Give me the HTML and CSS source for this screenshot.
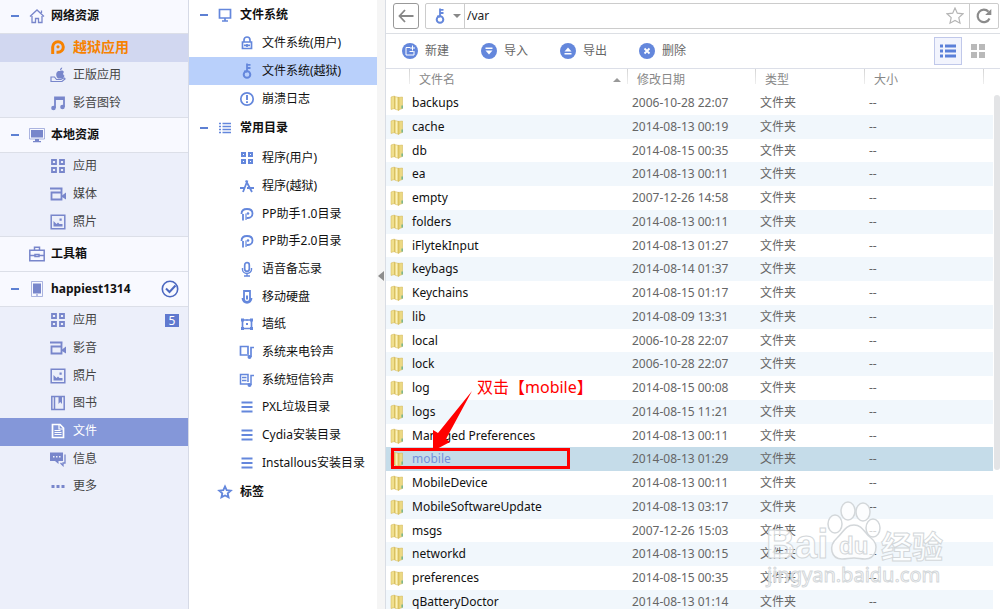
FILE: index.html
```html
<!DOCTYPE html>
<html lang="zh-CN">
<head>
    <meta charset="UTF-8">
    <meta name="viewport" content="width=device-width, initial-scale=1.0">
    <title>文件系统(越狱)</title>
    <link rel="stylesheet" href="styles.css">
</head>
<body>
    <!-- Icon definitions -->
    <svg class="defs" aria-hidden="true">
        <defs>
            <linearGradient id="gold" x1="0" x2="1" y1="0" y2="0">
                <stop offset="0" stop-color="#e0c65a"/>
                <stop offset=".45" stop-color="#fbf2bd"/>
                <stop offset="1" stop-color="#d9bd50"/>
            </linearGradient>
        </defs>
        <symbol id="house" viewBox="0 0 16 16"><path d="M1 8.500 8 2l7 6.500M3 8v6.500h3.500v-4h3v4H13V8M12.500 5V2.500" fill="none" stroke="currentColor" stroke-width="1.300"/></symbol>
        <symbol id="pp-bold" viewBox="0 0 16 16"><path d="M2.700 15V8a5.300 5.300 0 1 1 5.300 5.300H6.500" fill="none" stroke="currentColor" stroke-width="3"/><circle cx="8" cy="7.800" r="1.600" fill="currentColor"/></symbol>
        <symbol id="pp" viewBox="0 0 16 16"><path d="M4 14.500V8M2.500 8c0-3 2-5 5.500-5 3.500 0 5.500 2 5.500 4.500S11.500 12 9 12H7.500" fill="none" stroke="currentColor" stroke-width="1.800"/><path d="M7 14V7.500" stroke="currentColor" stroke-width="1.200"/><circle cx="9" cy="7.500" r="1.300" fill="currentColor"/></symbol>
        <symbol id="apple" viewBox="0 0 16 16"><path d="M10 4c2-1 3.500 0 4 1-1.500 1-1 3 .5 3.700C14 10 13 11.500 12 11.500H8C6 10 5.500 6 7.500 4.500 8.500 3.700 9.300 4 10 4zM10 3.200C10 1.700 11 .7 12.200.5 12.300 2 11.300 3 10 3.200z" fill="currentColor"/><path d="M1 10v4.500h11l3-2.500c0-1-1-1.200-2-.7l-2 1.200H6.500L4.500 10z" fill="#eceffa" stroke="currentColor" stroke-width="1.200"/></symbol>
        <symbol id="music" viewBox="0 0 16 16"><path d="M5 13V2.500h9V12M5 4h9" fill="none" stroke="currentColor" stroke-width="1.800"/><circle cx="3.500" cy="13" r="2.300" fill="currentColor"/><circle cx="12.500" cy="12" r="2.300" fill="currentColor"/></symbol>
        <symbol id="monitor" viewBox="0 0 16 16"><path d="M.5 1.500h15v10.500H.5z" fill="none" stroke="currentColor" opacity=".6"/><path d="M2 3h12v7.500H2zM6 12h4v2h2v1.200H4V14h2z" fill="currentColor"/></symbol>
        <symbol id="grid" viewBox="0 0 16 16"><path d="M2 2h4v4H2zM10 2h4v4h-4zM2 10h4v4H2zM10 10h4v4h-4z" fill="none" stroke="currentColor" stroke-width="1.800"/></symbol>
        <symbol id="grid-small" viewBox="0 0 16 16"><path d="M3 3h3v3H3zM10 3h3v3h-3zM3 10h3v3H3zM10 10h3v3h-3z" fill="none" stroke="currentColor" stroke-width="2"/></symbol>
        <symbol id="video" viewBox="0 0 16 16"><path d="M0 2.500h12.500M1.500 6.500h10v7h-10zM11.500 6V2" fill="none" stroke="currentColor" stroke-width="1.800"/><path d="m12 9.500 4-3v7l-4-2.500z" fill="currentColor"/></symbol>
        <symbol id="photo" viewBox="0 0 16 16"><path d="M1.200 1.200h13.600v13.600H1.200z" fill="none" stroke="currentColor" stroke-width="1.500"/><path d="M3.500 12.500V7l3 3L8 8.500l1.500 1.500h3v2.500zM9.500 4.500h2.200v2.200H9.500z" fill="currentColor"/></symbol>
        <symbol id="toolbox" viewBox="0 0 16 16"><path d="M.8 4.200h14.400v10.500H.8zM5.500 4V1.200h5V4M1 9.500h5M10 9.500h5M6 8.500h4v2H6z" fill="none" stroke="currentColor" stroke-width="1.500"/></symbol>
        <symbol id="phone" viewBox="0 0 16 16"><path d="M2.500.5h11v15h-11z" fill="none" stroke="currentColor" opacity=".6"/><path d="M4 2.500h8v10H4zM7 13.500h2v1H7z" fill="currentColor"/></symbol>
        <symbol id="book" viewBox="0 0 16 16"><path d="M1.800 1.500h12.400v13H1.800zM4.500 2v12" fill="none" stroke="currentColor" stroke-width="1.500"/><path d="M8.500 2H12v7L10.200 7 8.500 9z" fill="currentColor"/></symbol>
        <symbol id="doc" viewBox="0 0 16 16"><path d="M2.500 1.500H10L13.500 5v9.500h-11z" fill="none" stroke="currentColor" stroke-width="1.700"/><path d="M9 1v5h5M4.500 7.500h6M4.500 9.500h7M4.500 11.500h7" fill="none" stroke="currentColor" stroke-width="1.200"/></symbol>
        <symbol id="chat" viewBox="0 0 16 16"><path d="M0 1.500h13V10H8.500v3L5 10H0z" fill="currentColor"/><path d="M3 5h1.500v1.500H3zM6 5h1.500v1.500H6zM9 5h1.500v1.500H9z" fill="#eceffa"/><path d="M15 3.500v8.500h-2v2.500L10.500 12" fill="none" stroke="currentColor" stroke-width="1.300"/></symbol>
        <symbol id="dots" viewBox="0 0 16 16"><path d="M1.500 7h3v3h-3zM6.500 7h3v3h-3zM11.500 7h3v3h-3z" fill="currentColor"/></symbol>
        <symbol id="check" viewBox="0 0 18 18"><circle cx="9" cy="9" r="7.700" fill="none" stroke="currentColor" stroke-width="1.600"/><path d="m5 8.500 3.500 3.500 6-6.500" fill="none" stroke="currentColor" stroke-width="2"/></symbol>
        <symbol id="screen" viewBox="0 0 16 16"><path d="M2.500 2.500h11v8.500h-11zM8 11.500v2.500M5 14h6" fill="none" stroke="currentColor" stroke-width="1.700"/></symbol>
        <symbol id="lock" viewBox="0 0 16 16"><path d="M3.500 7h9v6.500h-9zM5 7V5a3 3 0 0 1 6 0v2M8 9v3M5 10.300h6" fill="none" stroke="currentColor" stroke-width="1.700"/></symbol>
        <symbol id="key" viewBox="0 0 16 16"><circle cx="8" cy="11.500" r="3.300" fill="none" stroke="currentColor" stroke-width="2"/><path d="M8 8.500V.5M7.500 1.800h4M7.500 5h4M5 8.500h3" fill="none" stroke="currentColor" stroke-width="1.800"/></symbol>
        <symbol id="alert" viewBox="0 0 16 16"><circle cx="8" cy="8" r="6.200" fill="none" stroke="currentColor" stroke-width="1.700"/><path d="M8 4v5M8 10.200V12" stroke="currentColor" stroke-width="1.900"/></symbol>
        <symbol id="list" viewBox="0 0 16 16"><path d="M2 3.500h2M2 6.500h2M2 9.500h2M2 12.500h2M5.500 3.500H14M5.500 6.500H14M5.500 9.500H14M5.500 12.500H14" stroke="currentColor" stroke-width="1.300"/></symbol>
        <symbol id="store" viewBox="0 0 16 16"><path d="M4 14 8.500 2.500M6.800 2.500 13 14M1 10h5M8 10h7" fill="none" stroke="currentColor" stroke-width="1.800"/></symbol>
        <symbol id="mic" viewBox="0 0 16 16"><rect x="5.700" y="1.700" width="4.600" height="8.600" rx="2.300" fill="none" stroke="currentColor" stroke-width="1.700"/><path d="M3.500 7v1.500a4.500 4 0 0 0 9 0V7M8 12.500V15M5 15h6" fill="none" stroke="currentColor" stroke-width="1.400"/></symbol>
        <symbol id="disk" viewBox="0 0 16 16"><path d="M5 2h6v8a3 3 0 0 1-6 0zM3.500 9c0 6.500 9 6.500 9 0" fill="none" stroke="currentColor" stroke-width="1.800"/><path d="M7 6.500h2v4H7z" fill="currentColor"/></symbol>
        <symbol id="wallpaper" viewBox="0 0 16 16"><path d="M3.500 4h9v8.500h-9z" fill="none" stroke="currentColor" stroke-width="1.700"/><path d="M2 2.500h3v3H2zM11 2.500h3v3h-3zM2 11h3v3H2zM11 11h3v3h-3zM7.500 3h1v2h-1zM7 7h2v2H7z" fill="currentColor"/></symbol>
        <symbol id="ring" viewBox="0 0 16 16"><path d="M10 11H1.500V2.500H9V10M12 13V3.500h3" fill="none" stroke="currentColor" stroke-width="1.700"/><circle cx="10.500" cy="13" r="2" fill="currentColor"/></symbol>
        <symbol id="sms" viewBox="0 0 16 16"><path d="M10 12H1.500V2.500H9V10M3 5.500h4.500M3 8.500h4.500M12 13V3.500h3" fill="none" stroke="currentColor" stroke-width="1.500"/><circle cx="10.500" cy="13" r="2" fill="currentColor"/></symbol>
        <symbol id="lines" viewBox="0 0 16 16"><path d="M2.500 3.500h11M2.500 8h11M2.500 12.500h11" stroke="currentColor" stroke-width="1.800"/></symbol>
        <symbol id="star" viewBox="0 0 16 16"><path d="m8 2.500 1.700 3.700 4.100.4-3.100 2.800.9 4L8 11.500l-3.600 1.900.9-4-3.100-2.800 4.100-.4z" fill="none" stroke="currentColor" stroke-width="1.800"/></symbol>
        <symbol id="star-thin" viewBox="0 0 18 18"><path d="m9 1 2.300 5.200 5.700.6-4.200 3.800 1.200 5.600L9 13.400l-5 2.800 1.200-5.600L1 6.800l5.700-.6z" fill="none" stroke="currentColor" stroke-width="1.200"/></symbol>
        <symbol id="folder" viewBox="0 0 14 16"><path d="M8 2.500 12.500 2v11.500L8 15z" fill="#ecd983" stroke="#d0b552" stroke-width=".5"/><path d="M1 2 4.500 1v12.500L1 14.500z" fill="#f0df8d" stroke="#d0b552" stroke-width=".5"/><path d="M4.500 1.500 9 2.500v13L4.500 14z" fill="url(#gold)" stroke="#d0b552" stroke-width=".5"/><path d="M11.500 10.500h1.300v3h-1.300z" fill="#63b08e"/></symbol>
    </svg>

    <div class="app">
        <!-- Device sidebar -->
        <nav class="sidebar">
            <h2 class="section"><i class="minus"></i><svg class="icon"><use href="#house"/></svg>网络资源</h2>
            <div class="group">
                <a class="item promo" href="#"><svg class="icon"><use href="#pp-bold"/></svg>越狱应用</a>
                <a class="item" href="#"><svg class="icon"><use href="#apple"/></svg>正版应用</a>
                <a class="item" href="#"><svg class="icon"><use href="#music"/></svg>影音图铃</a>
            </div>
            <h2 class="section"><i class="minus"></i><svg class="icon"><use href="#monitor"/></svg>本地资源</h2>
            <div class="group">
                <a class="item" href="#"><svg class="icon"><use href="#grid"/></svg>应用</a>
                <a class="item" href="#"><svg class="icon"><use href="#video"/></svg>媒体</a>
                <a class="item" href="#"><svg class="icon"><use href="#photo"/></svg>照片</a>
            </div>
            <h2 class="section"><i class="minus none"></i><svg class="icon"><use href="#toolbox"/></svg>工具箱</h2>
            <h2 class="section device"><i class="minus"></i><svg class="icon"><use href="#phone"/></svg>happiest1314<svg class="icon check"><use href="#check"/></svg></h2>
            <div class="group">
                <a class="item" href="#"><svg class="icon"><use href="#grid"/></svg>应用<span class="count">5</span></a>
                <a class="item" href="#"><svg class="icon"><use href="#video"/></svg>影音</a>
                <a class="item" href="#"><svg class="icon"><use href="#photo"/></svg>照片</a>
                <a class="item" href="#"><svg class="icon"><use href="#book"/></svg>图书</a>
                <a class="item current" href="#"><svg class="icon"><use href="#doc"/></svg>文件</a>
                <a class="item" href="#"><svg class="icon"><use href="#chat"/></svg>信息</a>
                <a class="item" href="#"><svg class="icon"><use href="#dots"/></svg>更多</a>
            </div>
        </nav>

        <!-- File system tree -->
        <nav class="tree">
            <h2 class="branch"><i class="minus"></i><svg class="icon"><use href="#screen"/></svg>文件系统</h2>
            <div class="leaves">
                <a class="leaf" href="#"><svg class="icon"><use href="#lock"/></svg>文件系统(用户)</a>
                <a class="leaf current" href="#"><svg class="icon"><use href="#key"/></svg>文件系统(越狱)</a>
                <a class="leaf" href="#"><svg class="icon"><use href="#alert"/></svg>崩溃日志</a>
            </div>
            <h2 class="branch"><i class="minus"></i><svg class="icon"><use href="#list"/></svg>常用目录</h2>
            <div class="leaves">
                <a class="leaf" href="#"><svg class="icon"><use href="#grid-small"/></svg>程序(用户)</a>
                <a class="leaf" href="#"><svg class="icon"><use href="#store"/></svg>程序(越狱)</a>
                <a class="leaf" href="#"><svg class="icon"><use href="#pp"/></svg>PP助手1.0目录</a>
                <a class="leaf" href="#"><svg class="icon"><use href="#pp"/></svg>PP助手2.0目录</a>
                <a class="leaf" href="#"><svg class="icon"><use href="#mic"/></svg>语音备忘录</a>
                <a class="leaf" href="#"><svg class="icon"><use href="#disk"/></svg>移动硬盘</a>
                <a class="leaf" href="#"><svg class="icon"><use href="#wallpaper"/></svg>墙纸</a>
                <a class="leaf" href="#"><svg class="icon"><use href="#ring"/></svg>系统来电铃声</a>
                <a class="leaf" href="#"><svg class="icon"><use href="#sms"/></svg>系统短信铃声</a>
                <a class="leaf" href="#"><svg class="icon"><use href="#lines"/></svg>PXL垃圾目录</a>
                <a class="leaf" href="#"><svg class="icon"><use href="#lines"/></svg>Cydia安装目录</a>
                <a class="leaf" href="#"><svg class="icon"><use href="#lines"/></svg>Installous安装目录</a>
            </div>
            <h2 class="branch"><i class="minus none"></i><svg class="icon"><use href="#star"/></svg>标签</h2>
        </nav>

        <button class="splitter" aria-label="收起"></button>

        <!-- File browser -->
        <main class="browser">
            <div class="address">
                <button class="back" aria-label="返回"><svg width="16" height="16" viewBox="0 0 16 16"><path d="M15.500 8H1.500M7 2 1.500 8 7 14" fill="none" stroke="#888" stroke-width="1.800"/></svg></button>
                <div class="path">
                    <button class="root" aria-label="根目录"><svg class="icon"><use href="#key"/></svg><i class="caret"></i></button>
                    <input class="path-input" type="text" value="/var" aria-label="路径">
                    <button class="fav" aria-label="收藏"><svg width="18" height="18"><use href="#star-thin"/></svg></button>
                    <button class="reload" aria-label="刷新"><svg width="16" height="16" viewBox="0 0 16 16"><path d="M13.500 10.500A6.200 6.200 0 1 1 12.500 3.800" fill="none" stroke="#8b8b8b" stroke-width="2.200"/><path d="M15.300 1v6H9.200z" fill="#8b8b8b"/></svg></button>
                </div>
            </div>

            <div class="toolbar">
                <button class="tool"><svg width="16" height="16" viewBox="0 0 16 16"><circle cx="8" cy="8" r="8" fill="#6487dc"/><path d="M8 4.500H4v7.500h8V8M7.500 8.500h4M10.500 2.500v5M8 5h5" fill="none" stroke="#fff"/></svg>新建</button>
                <button class="tool"><svg width="16" height="16" viewBox="0 0 16 16"><circle cx="8" cy="8" r="8" fill="#6487dc"/><path d="M4.500 4.500h7V6h-7zM4.500 7.500h7L8 11.500z" fill="#fff"/></svg>导入</button>
                <button class="tool"><svg width="16" height="16" viewBox="0 0 16 16"><circle cx="8" cy="8" r="8" fill="#6487dc"/><path d="M4.500 10h7v1.500h-7zM4.500 8.500h7L8 4.500z" fill="#fff"/></svg>导出</button>
                <button class="tool"><svg width="16" height="16" viewBox="0 0 16 16"><circle cx="8" cy="8" r="8" fill="#6487dc"/><path d="m5.500 5.500 5 5M10.500 5.500l-5 5" stroke="#fff" stroke-width="1.800"/></svg>删除</button>
                <div class="views">
                    <button class="view on" aria-label="列表"><svg width="18" height="14" viewBox="0 0 18 14"><path d="M1 2h3M1 7h3M1 12h3M6 2h11M6 7h11M6 12h11" stroke="#5b80d9" stroke-width="3"/></svg></button>
                    <button class="view" aria-label="图标"><svg width="14" height="14" viewBox="0 0 14 14"><path d="M0 0h6v6H0zM8 0h6v6H8zM0 8h6v6H0zM8 8h6v6H8z" fill="#b9b9b9"/></svg></button>
                </div>
            </div>

            <div class="list">
                <table class="files">
                    <thead>
                        <tr><th class="c-icon"></th><th class="c-name"><span class="head">文件名<i class="sort"></i></span></th><th class="c-date">修改日期</th><th class="c-type">类型</th><th class="c-size">大小</th><th class="c-end"></th></tr>
                    </thead>
                    <tbody>
                        <tr><td><svg class="folder"><use href="#folder"/></svg></td><td>backups</td><td>2006-10-28 22:07</td><td>文件夹</td><td>--</td><td></td></tr>
                        <tr><td><svg class="folder"><use href="#folder"/></svg></td><td>cache</td><td>2014-08-13 00:19</td><td>文件夹</td><td>--</td><td></td></tr>
                        <tr><td><svg class="folder"><use href="#folder"/></svg></td><td>db</td><td>2014-08-15 00:35</td><td>文件夹</td><td>--</td><td></td></tr>
                        <tr><td><svg class="folder"><use href="#folder"/></svg></td><td>ea</td><td>2014-08-13 00:11</td><td>文件夹</td><td>--</td><td></td></tr>
                        <tr><td><svg class="folder"><use href="#folder"/></svg></td><td>empty</td><td>2007-12-26 14:58</td><td>文件夹</td><td>--</td><td></td></tr>
                        <tr><td><svg class="folder"><use href="#folder"/></svg></td><td>folders</td><td>2014-08-13 00:11</td><td>文件夹</td><td>--</td><td></td></tr>
                        <tr><td><svg class="folder"><use href="#folder"/></svg></td><td>iFlytekInput</td><td>2014-08-13 01:27</td><td>文件夹</td><td>--</td><td></td></tr>
                        <tr><td><svg class="folder"><use href="#folder"/></svg></td><td>keybags</td><td>2014-08-14 01:37</td><td>文件夹</td><td>--</td><td></td></tr>
                        <tr><td><svg class="folder"><use href="#folder"/></svg></td><td>Keychains</td><td>2014-08-15 01:17</td><td>文件夹</td><td>--</td><td></td></tr>
                        <tr><td><svg class="folder"><use href="#folder"/></svg></td><td>lib</td><td>2014-08-09 13:31</td><td>文件夹</td><td>--</td><td></td></tr>
                        <tr><td><svg class="folder"><use href="#folder"/></svg></td><td>local</td><td>2006-10-28 22:07</td><td>文件夹</td><td>--</td><td></td></tr>
                        <tr><td><svg class="folder"><use href="#folder"/></svg></td><td>lock</td><td>2006-10-28 22:07</td><td>文件夹</td><td>--</td><td></td></tr>
                        <tr><td><svg class="folder"><use href="#folder"/></svg></td><td>log</td><td>2014-08-15 00:08</td><td>文件夹</td><td>--</td><td></td></tr>
                        <tr><td><svg class="folder"><use href="#folder"/></svg></td><td>logs</td><td>2014-08-15 11:21</td><td>文件夹</td><td>--</td><td></td></tr>
                        <tr><td><svg class="folder"><use href="#folder"/></svg></td><td>Managed Preferences</td><td>2014-08-13 00:11</td><td>文件夹</td><td>--</td><td></td></tr>
                        <tr class="selected">
                            <td><svg class="folder"><use href="#folder"/></svg>
                                <!-- Step annotation -->
                                <div class="note">
                                    <div class="note-box"></div>
                                    <svg class="note-arrow" width="44" height="64" viewBox="0 0 44 64"><path d="M40 3 14 51l4 3L1 63V42l5 3z" fill="red"/></svg>
                                    <div class="note-text">双击【mobile】</div>
                                </div>
                            </td>
                            <td>mobile</td><td>2014-08-13 01:29</td><td>文件夹</td><td>--</td><td></td>
                        </tr>
                        <tr><td><svg class="folder"><use href="#folder"/></svg></td><td>MobileDevice</td><td>2014-08-13 00:11</td><td>文件夹</td><td>--</td><td></td></tr>
                        <tr><td><svg class="folder"><use href="#folder"/></svg></td><td>MobileSoftwareUpdate</td><td>2014-08-13 03:17</td><td>文件夹</td><td>--</td><td></td></tr>
                        <tr><td><svg class="folder"><use href="#folder"/></svg></td><td>msgs</td><td>2007-12-26 15:03</td><td>文件夹</td><td>--</td><td></td></tr>
                        <tr><td><svg class="folder"><use href="#folder"/></svg></td><td>networkd</td><td>2014-08-13 00:15</td><td>文件夹</td><td>--</td><td></td></tr>
                        <tr><td><svg class="folder"><use href="#folder"/></svg></td><td>preferences</td><td>2014-08-15 00:35</td><td>文件夹</td><td>--</td><td></td></tr>
                        <tr><td><svg class="folder"><use href="#folder"/></svg></td><td>qBatteryDoctor</td><td>2014-08-13 01:14</td><td>文件夹</td><td>--</td><td></td></tr>
                    </tbody>
                </table>
                <div class="scroll"><div class="thumb"></div></div>
            </div>
        </main>
    </div>

    <!-- Watermark -->
    <svg class="watermark" width="184" height="92" viewBox="0 0 184 92">
        <g fill="#fff" fill-opacity=".75" stroke="#d3d7da" stroke-width="1.500">
            <ellipse cx="71" cy="23" rx="7" ry="9"/>
            <ellipse cx="84" cy="10" rx="7" ry="9"/>
            <ellipse cx="99" cy="11" rx="7" ry="9"/>
            <ellipse cx="109" cy="27" rx="7" ry="9"/>
            <path d="M90 24c9 0 10 8 17 13 9 7 5 21-6 21-5 0-6-1-11-1s-7 1-12 1c-11 0-14-13-5-21 6-5 8-13 17-13z"/>
        </g>
        <g class="mark-text">
            <text x="2" y="57" font-size="40">Bai</text>
            <text x="75" y="53" font-size="24">du</text>
            <text x="117" y="57" font-size="31">经验</text>
            <text class="mark-url" x="3" y="81" font-size="20">jingyan.baidu.com</text>
        </g>
    </svg>
</body>
</html>
```
FILE: styles.css
```css
/* General page styling */
* {
    box-sizing: border-box;
}

body {
    margin: 0;
    background: #fff;
    color: #111;
    font-family: "Noto Sans", "Noto Sans CJK SC", sans-serif;
    font-size: 12px;
    line-height: 16px;
}

a {
    color: inherit;
    text-decoration: none;
}

button {
    margin: 0;
    padding: 0;
    border: none;
    background: none;
    color: inherit;
    font: inherit;
    cursor: pointer;
}

h2 {
    margin: 0;
    font-size: 12px;
    font-weight: bold;
}

.defs {
    position: absolute;
    width: 0;
    height: 0;
}

.icon {
    flex: none;
    width: 16px;
    height: 16px;
}

.app {
    display: flex;
    height: 100vh;
    overflow: hidden;
}

/* Collapse mark in front of a heading */
.minus {
    flex: none;
    width: 8px;
    height: 2px;
    background: #5d80d3;
}

.minus.none {
    background: none;
}

/* Device sidebar */
.sidebar {
    flex: none;
    width: 189px;
    background: #eceffa;
    border-right: 1px solid #d6dae6;
}

.section {
    display: flex;
    align-items: center;
    height: 35px;
    padding: 0 9px 1px 11px;
    background: #f8f9ff;
    border-bottom: 1px solid #dcdfe8;
}

.section:first-child {
    height: 34px;
}

.section .icon {
    margin: 0 6px 0 10px;
    color: #7886cb;
}

.device .check {
    width: 18px;
    height: 18px;
    margin: 0 0 0 auto;
    color: #4c68c0;
}

.group {
    border-bottom: 1px solid #dcdfe8;
}

.group:last-child {
    border-bottom: none;
}

.item {
    display: flex;
    align-items: center;
    gap: 7px;
    height: 28px;
    padding: 0 9px 2px 50px;
    color: #444;
}

.item:nth-child(3n) {
    height: 27px;
}

.item .icon {
    color: #7886cb;
}

.promo {
    background: #d1d7f0;
    color: #f78200;
    font-size: 14px;
    font-weight: bold;
}

.promo .icon {
    color: #f78200;
}

.item.current,
.item.current .icon {
    background: #8497d9;
    color: #fff;
}

.count {
    width: 14px;
    height: 13px;
    margin-left: auto;
    background: #6079cf;
    color: #fff;
    line-height: 13px;
    text-align: center;
}

/* File system tree */
.tree {
    flex: none;
    width: 188px;
}

.branch {
    display: flex;
    align-items: center;
    height: 32px;
    padding-left: 11px;
}

.branch:first-child {
    height: 29px;
}

.branch .icon {
    margin: 0 7px 0 9px;
    color: #6487dc;
}

.leaf {
    display: flex;
    align-items: center;
    gap: 7px;
    height: 28px;
    padding-left: 50px;
    white-space: nowrap;
}

.leaf:nth-child(3n) {
    height: 27px;
}

.leaf .icon {
    color: #6487dc;
}

.leaf.current {
    background: #b9d0fb;
}

/* Collapse strip between the tree and the list */
.splitter {
    display: flex;
    flex: none;
    align-items: center;
    width: 9px;
    background: #f5f5f5;
    border-right: 1px solid #d9dde4;
}

.splitter::before {
    content: "";
    margin: 0 0 58px 1px;
    border: 5px solid transparent;
    border-right: 6px solid #8d8d8d;
    border-left: none;
}

/* Address bar */
.browser {
    display: flex;
    flex: 1;
    flex-direction: column;
    min-width: 0;
}

.address {
    display: flex;
    flex: none;
    gap: 6px;
    height: 34px;
    padding: 3px 1px 4px 7px;
    border-bottom: 1px solid #dcdfe4;
}

.back {
    display: flex;
    align-items: center;
    justify-content: center;
    width: 26px;
    height: 26px;
    border: 1px solid #999;
    border-radius: 3px;
}

.path {
    display: flex;
    flex: 1;
    height: 26px;
    border: 1px solid #ccc;
    border-radius: 2px;
}

.root {
    display: flex;
    align-items: center;
    gap: 5px;
    width: 39px;
    padding-left: 6px;
    border-right: 1px solid #ccc;
    color: #6487dc;
}

.caret {
    border: 4px solid transparent;
    border-top-color: #888;
    border-bottom: none;
}

.path-input {
    flex: 1;
    min-width: 0;
    padding: 0 2px;
    border: none;
    outline: none;
    color: #222;
    font: inherit;
}

.fav {
    width: 28px;
    padding-top: 3px;
    color: #b5b5b5;
}

.reload {
    width: 29px;
    padding-top: 3px;
    border-left: 1px solid #ccc;
}

/* Toolbar */
.toolbar {
    display: flex;
    flex: none;
    align-items: center;
    height: 35px;
    padding: 0 8px 0 16px;
    border-bottom: 1px solid #dcdfe8;
    color: #666;
}

.tool {
    display: flex;
    align-items: center;
    gap: 7px;
    width: 79px;
}

.views {
    display: flex;
    gap: 2px;
    margin-left: auto;
}

.view {
    display: flex;
    align-items: center;
    justify-content: center;
    width: 28px;
    height: 28px;
}

.view.on {
    background: #f2f4fd;
    border: 1px solid #c0c8ea;
}

/* File list */
.list {
    display: flex;
    flex: 1;
    min-height: 0;
    overflow: hidden;
}

.files {
    flex: 1;
    align-self: flex-start;
    table-layout: fixed;
    border-collapse: collapse;
}

th {
    height: 22px;
    padding: 0 0 0 10px;
    background: linear-gradient(#d4d4d4, #eee) left top / 1px 15px no-repeat;
    color: #888;
    font-weight: normal;
    text-align: left;
}

.c-icon {
    width: 23px;
    padding: 0;
    background: none;
}

.c-date {
    width: 128px;
}

.c-type {
    width: 109px;
}

.c-size {
    width: 119px;
}

.c-end {
    width: 10px;
    padding: 0;
}

.head {
    display: flex;
    align-items: center;
    justify-content: space-between;
    padding-right: 6px;
}

.sort {
    border: 4px solid transparent;
    border-top: none;
    border-bottom-color: #999;
}

td {
    height: 24px;
    padding: 0 0 0 5px;
    color: #666;
    white-space: nowrap;
}

td:first-child {
    position: relative;
    padding-left: 4px;
}

td:nth-child(2) {
    padding-left: 3px;
    color: #111;
}

tbody tr:nth-child(4n + 3) td {
    height: 23px;
}

tbody tr:nth-child(even) {
    background: #f1f7fc;
}

tbody tr.selected {
    background: #c5dce9;
}

.selected td:nth-child(2) {
    color: #7490dc;
}

.folder {
    display: block;
    width: 14px;
    height: 16px;
}

.scroll {
    flex: none;
    width: 7px;
    padding: 26px 0 0 1px;
}

.thumb {
    height: 375px;
    background: #e3e4e6;
    border-radius: 3px;
}

/* Step annotation over the selected row */
.note {
    position: absolute;
    top: 1px;
    left: 5px;
    z-index: 1;
    pointer-events: none;
}

.note-box {
    width: 179px;
    height: 21px;
    border: 3px solid #f00;
}

.note-arrow {
    position: absolute;
    top: -60px;
    left: 41px;
}

.note-text {
    position: absolute;
    top: -71px;
    left: 86px;
    color: #f00;
    font-size: 16px;
    line-height: 20px;
}

/* Watermark */
.watermark {
    position: absolute;
    right: 52px;
    bottom: 16px;
    pointer-events: none;
}

.mark-text {
    fill: #fff;
    fill-opacity: 0.75;
    stroke: #d3d7da;
    font-family: "Liberation Sans", "Noto Sans CJK SC", sans-serif;
    font-weight: bold;
}

.mark-url {
    font-family: "Noto Sans", sans-serif;
    font-weight: normal;
}
```
